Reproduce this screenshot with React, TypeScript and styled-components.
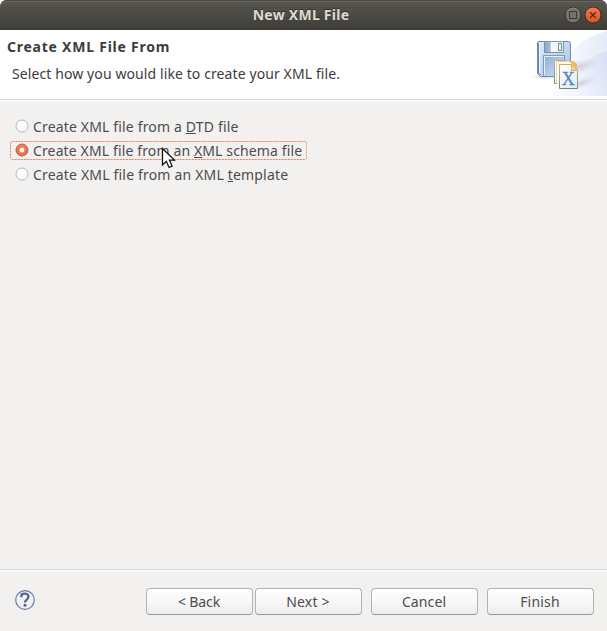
import React, { useState } from "react";
import styled, { createGlobalStyle } from "styled-components";

const GlobalStyle = createGlobalStyle`
  *, *::before, *::after { box-sizing: border-box; }
  html, body { margin: 0; padding: 0; background: #fff; overflow: hidden; }
  body { font-family: "Noto Sans", "Open Sans", sans-serif; font-size: 14px; color: #3c3c3c; }
`;

const Dialog = styled.div`
  position: relative;
  width: 607px;
  height: 631px;
  display: flex;
  flex-direction: column;
  background: #f2f1f0;
`;

const TitleBackdrop = styled.div`
  background: #fff;
  flex: 0 0 30px;
`;

const TitleBar = styled.header`
  height: 30px;
  display: grid;
  grid-template-columns: 60px 1fr 60px;
  align-items: center;
  border-radius: 7px 7px 0 0;
  background: linear-gradient(#595750, #3d3c37);
  box-shadow: inset 0 1px 0 #4b4a44, inset 0 2px 0 #686660;
`;

const Title = styled.h1`
  margin: 0;
  padding-right: 5px;
  text-align: center;
  font-size: 14px;
  line-height: 30px;
  font-weight: 700;
  letter-spacing: 0.25px;
  color: #dfdbd2;
  text-shadow: 0 -1px 0 #2c2b27;
`;

const WindowControls = styled.div`
  display: flex;
  justify-content: flex-end;
  gap: 2px;
  padding-right: 5px;
`;

const ControlButton = styled.button`
  width: 18px;
  height: 18px;
  padding: 0;
  border: 0;
  background: none;
  svg { display: block; }
`;

const Banner = styled.section`
  flex: 0 0 69px;
  display: flex;
  justify-content: space-between;
  background: #fff;
`;

const BannerText = styled.div`
  padding: 7px 0 0 7px;
`;

const Heading = styled.h2`
  margin: 0;
  font-size: 14px;
  line-height: 20px;
  font-weight: 700;
  letter-spacing: 0.76px;
  white-space: nowrap;
`;

const Description = styled.p`
  margin: 7px 0 0 5px;
  line-height: 20px;
  letter-spacing: 0.1px;
  white-space: nowrap;
`;

const Separator = styled.div`
  flex: 0 0 3px;
  background: linear-gradient(#d9d9d9 0 1px, #f9f9f9 1px 3px);
`;

const Options = styled.main`
  flex: 1;
  display: flex;
  flex-direction: column;
  align-items: flex-start;
  gap: 5px;
  padding: 15px 0 0 10px;
`;

const OptionRow = styled.label`
  position: relative;
  height: 19px;
  display: flex;
  align-items: flex-start;
  padding: 0 5px;
`;

const RadioDrawing = styled.svg`
  display: block;
  flex: none;
  margin-top: 2px;
`;

const OptionText = styled.span<{ $spacing: number }>`
  margin-left: 4px;
  line-height: 19px;
  white-space: nowrap;
  letter-spacing: ${(p) => p.$spacing}px;
  color: #4c4c4c;
`;

const Mnemonic = styled.span`
  text-decoration: underline;
  text-decoration-thickness: 1px;
  text-underline-offset: 1px;
  text-decoration-skip-ink: none;
`;

const FocusRing = styled.svg`
  position: absolute;
  left: 0;
  top: 0;
  rect { width: calc(100% - 1px); }
`;

const Footer = styled.footer`
  flex: 0 0 59px;
  display: flex;
  align-items: flex-start;
  padding: 16px 13px 0 15px;
`;

const HelpButton = styled.button`
  margin: 2px auto 0 0;
  padding: 0;
  border: 0;
  background: none;
  svg { display: block; }
`;

const FooterButton = styled.button<{ $gap: number; $spacing: number }>`
  width: 107px;
  height: 27px;
  margin-left: ${(p) => p.$gap}px;
  padding: 0 1px 0 0;
  border: 1px solid #b3b2b0;
  border-bottom-color: #989795;
  border-radius: 4px;
  background: linear-gradient(#fefefe, #f8f8f8 50%, #ededec);
  font: inherit;
  line-height: 25px;
  letter-spacing: ${(p) => p.$spacing}px;
  color: #4c4c4c;
`;

const Pointer = styled.svg`
  position: absolute;
  left: 161px;
  top: 147px;
  pointer-events: none;
`;

function MaximizeIcon() {
  return (
    <svg width="18" height="18" viewBox="0 0 18 18">
      <circle cx="9" cy="9" r="8" fill="#74726b" stroke="#33322e" />
      <path d="M3 5.5a7 7 0 0 1 12 0" fill="none" stroke="#908e85" strokeWidth=".8" />
      <rect x="5.5" y="5.5" width="7" height="7" fill="none" stroke="#3c3b37" />
    </svg>
  );
}

function CloseIcon() {
  return (
    <svg width="18" height="18" viewBox="0 0 18 18">
      <defs>
        <linearGradient id="close" x2="0" y2="1">
          <stop stopColor="#f37a54" />
          <stop offset="1" stopColor="#e2501f" />
        </linearGradient>
      </defs>
      <circle cx="9" cy="9" r="8" fill="url(#close)" stroke="#3b3029" />
      <path d="M6.2 6.200l5.600 5.600M11.800 6.200l-5.600 5.600" stroke="#452d20" strokeWidth="1.3" />
    </svg>
  );
}

function BannerArt() {
  return (
    <svg width="77" height="66" viewBox="530 30 77 66">
      <defs>
        <linearGradient id="sweep" x1="0" x2="1" y1=".4" y2=".5">
          <stop stopColor="#fff" />
          <stop offset="1" stopColor="#e4eaf8" />
        </linearGradient>
        <linearGradient id="sweep2" x1="0" x2="1" y1="1" y2=".4">
          <stop stopColor="#fff" stopOpacity="0" />
          <stop offset="1" stopColor="#d0dbf2" />
        </linearGradient>
        <linearGradient id="disk" x2="1" y2="1">
          <stop stopColor="#dfeaf7" />
          <stop offset="1" stopColor="#a9c3e6" />
        </linearGradient>
        <linearGradient id="shutter">
          <stop stopColor="#8ba3ca" />
          <stop offset=".3" stopColor="#a9bcd9" />
          <stop offset=".36" stopColor="#f7f9fc" />
          <stop offset="1" stopColor="#e3ebf4" />
        </linearGradient>
        <linearGradient id="label" x2="1" y2="1">
          <stop stopColor="#8eabd8" />
          <stop offset="1" stopColor="#d3e1f4" />
        </linearGradient>
        <linearGradient id="page" x2="1" y2="1">
          <stop stopColor="#fff" />
          <stop offset="1" stopColor="#dceafb" />
        </linearGradient>
        <linearGradient id="pageEdge" x2="0" y2="1">
          <stop stopColor="#dca950" />
          <stop offset=".45" stopColor="#a2aa75" />
          <stop offset="1" stopColor="#6f8f70" />
        </linearGradient>
        <radialGradient id="shade">
          <stop stopColor="#b4aecb" stopOpacity=".55" />
          <stop offset="1" stopColor="#c5c4df" stopOpacity="0" />
        </radialGradient>
      </defs>
      <path d="M570 53Q583 37 607 31V96H550Q558 72 570 53Z" fill="url(#sweep)" />
      <path d="M570 96Q575 60 607 51V96Z" fill="url(#sweep2)" opacity=".55" />
      <ellipse cx="579" cy="67" rx="23" ry="7" fill="url(#shade)" transform="rotate(-18 579 67)" />
      <ellipse cx="582" cy="83" rx="16" ry="5" fill="url(#shade)" transform="rotate(-20 582 83)" />
      <ellipse cx="545" cy="77" rx="14" ry="3" fill="url(#shade)" />
      <path d="M538.5 41.5h30q2 0 2 2v31q0 2-2 2h-28l-3-3v-31q0-1 1-1Z" fill="url(#disk)" stroke="#728ba5" />
      <path d="M538.5 43v30l2 2" fill="none" stroke="#6387bd" />
      <path d="M539.500 43v30" stroke="#f0f6fd" />
      <rect x="544.5" y="41.5" width="19" height="11" fill="url(#shutter)" stroke="#7f95a8" />
      <rect x="558.5" y="43.5" width="3" height="7" fill="#e9f2f6" stroke="#7b9695" />
      <path d="M543.5 76V55.500h21V76" fill="url(#label)" stroke="#7c9bc1" />
      <path d="M544.500 75V56.500h19" fill="none" stroke="#e6effa" />
      <path d="M554.5 60.500h12l4 4v19h-16Z" fill="#fffdf4" stroke="url(#pageEdge)" />
      <path d="M556.500 61.500h14l3 3v19h-17Z" fill="#fcfcf8" stroke="#d4dad2" />
      <path d="M568 60l9 9v-5q-3-3-5-3Z" fill="#f2b75d" />
      <path d="M559.500 64.500h12l6 6v18h-18Z" fill="url(#page)" stroke="url(#pageEdge)" />
      <path d="M571.500 64.500v6h6Z" fill="#fbd38c" stroke="#dfa24c" strokeWidth=".8" />
      <text x="568.3" y="84.800" textAnchor="middle" fontFamily="Liberation Serif, serif" fontSize="18" fontWeight="400" fill="#5a85b3" stroke="#5a85b3" strokeWidth=".3">X</text>
    </svg>
  );
}

function RadioMark({ selected }: { selected: boolean }) {
  return (
    <RadioDrawing width="14" height="14" viewBox="0 0 14 14">
      {selected ? (
        <>
          <circle cx="7" cy="7" r="6" fill="#ee7348" stroke="#a9674f" />
          <path d="M3 4.500a5 5 0 0 1 8 0" fill="none" stroke="#f59370" strokeWidth=".8" />
          <circle cx="7" cy="7" r="2.900" fill="#fff" stroke="#dc6d49" strokeWidth=".8" />
        </>
      ) : (
        <circle cx="7" cy="7" r="6" fill="#fdfdfd" stroke="#b8b7b5" />
      )}
    </RadioDrawing>
  );
}

function HelpIcon() {
  return (
    <svg width="20" height="20" viewBox="0 0 20 20">
      <circle cx="10" cy="10" r="9.300" fill="#f1f1f3" stroke="#6b7d9f" strokeWidth="1.200" />
      <path d="M6.500 7.200V4.500C9 3 13.500 3.300 13.500 6.800c0 2.700-3.600 2.900-3.600 5.800" fill="none" stroke="#50648d" strokeWidth="2.200" />
      <circle cx="10" cy="15.300" r="1.500" fill="#50648d" />
    </svg>
  );
}

const options = [
  { before: "Create XML file from a ", key: "D", after: "TD file", spacing: 0.16 },
  { before: "Create XML file from an ", key: "X", after: "ML schema file", spacing: 0.13 },
  { before: "Create XML file from an XML ", key: "t", after: "emplate", spacing: 0.18 },
];

const actions = [
  { label: "< Back", gap: 0, spacing: -0.1 },
  { label: "Next >", gap: 2, spacing: 0.2 },
  { label: "Cancel", gap: 9, spacing: 0.1 },
  { label: "Finish", gap: 9, spacing: 0.2 },
];

export default function App() {
  const [selected, setSelected] = useState(1);
  return (
    <>
      <GlobalStyle />
      <Dialog>
        <TitleBackdrop>
          <TitleBar>
            <span />
            <Title>New XML File</Title>
            <WindowControls>
              <ControlButton aria-label="Maximize"><MaximizeIcon /></ControlButton>
              <ControlButton aria-label="Close"><CloseIcon /></ControlButton>
            </WindowControls>
          </TitleBar>
        </TitleBackdrop>
        <Banner>
          <BannerText>
            <Heading>Create XML File From</Heading>
            <Description>Select how you would like to create your XML file.</Description>
          </BannerText>
          <BannerArt />
        </Banner>
        <Separator />
        <Options>
          {options.map((o, i) => (
            <OptionRow key={o.key} onClick={() => setSelected(i)}>
              <RadioMark selected={i === selected} />
              <OptionText $spacing={o.spacing}>
                {o.before}<Mnemonic>{o.key}</Mnemonic>{o.after}
              </OptionText>
              {i === selected && (
                <FocusRing width="100%" height="19">
                  <rect x=".5" y=".5" height="18" rx="2" fill="none" stroke="#ee7d55" strokeDasharray="2 1" />
                </FocusRing>
              )}
            </OptionRow>
          ))}
        </Options>
        <Separator />
        <Footer>
          <HelpButton aria-label="Help"><HelpIcon /></HelpButton>
          {actions.map((a) => (
            <FooterButton key={a.label} $gap={a.gap} $spacing={a.spacing}>{a.label}</FooterButton>
          ))}
        </Footer>
        <Pointer width="16" height="24" viewBox="0 0 16 24">
          <path d="M1.500 1.500v16.500l3.800-3.700 2.800 6.200 3-1.400-2.700-6h5Z" fill="#fff" stroke="#111" strokeWidth="1.300" />
        </Pointer>
      </Dialog>
    </>
  );
}
